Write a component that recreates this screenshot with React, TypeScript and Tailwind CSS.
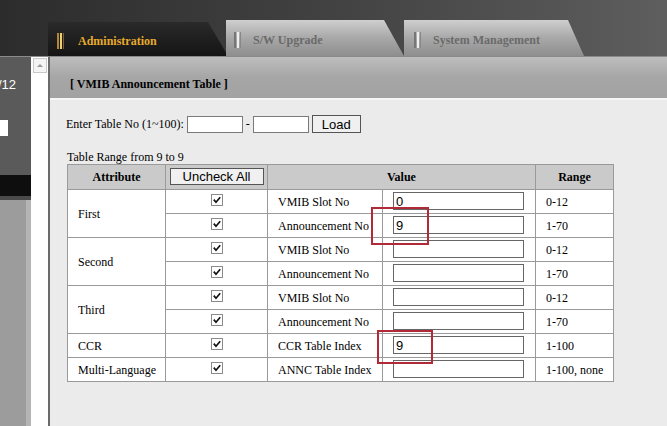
import React from 'react';

const serif = { fontFamily: '"Liberation Serif", "Times New Roman", serif' };
const sans = { fontFamily: '"Liberation Sans", Arial, sans-serif' };

const Check = () => (
    <svg width="12" height="12" viewBox="0 0 12 12" className="inline-block">
        <rect x="0.5" y="0.5" width="11" height="11" fill="#fff" stroke="#8a8a8a" />
        <path d="M2.8 5.6 L5 8.2 L9.2 3.2" fill="none" stroke="#111" strokeWidth="1.7" />
    </svg>
);

const Grip = ({ gold }: { gold?: boolean }) => (
    <div className="flex gap-[1px] h-[16px] mr-[10px]">
        <div className={`w-[2px] h-full ${gold ? 'bg-[#b08a30]' : 'bg-[#777]'}`} />
        <div className={`w-[2px] h-full ${gold ? 'bg-[#f0d070]' : 'bg-[#eee]'}`} />
        <div className={`w-[1px] h-full ${gold ? 'bg-[#806020]' : 'bg-[#888]'}`} />
    </div>
);

const rows = [
    { attr: 'First', span: 2, label: 'VMIB Slot No', value: '0', range: '0-12' },
    { attr: '', span: 0, label: 'Announcement No', value: '9', range: '1-70' },
    { attr: 'Second', span: 2, label: 'VMIB Slot No', value: '', range: '0-12' },
    { attr: '', span: 0, label: 'Announcement No', value: '', range: '1-70' },
    { attr: 'Third', span: 2, label: 'VMIB Slot No', value: '', range: '0-12' },
    { attr: '', span: 0, label: 'Announcement No', value: '', range: '1-70' },
    { attr: 'CCR', span: 1, label: 'CCR Table Index', value: '9', range: '1-100' },
    { attr: 'Multi-Language', span: 1, label: 'ANNC Table Index', value: '', range: '1-100, none' },
];

const App = () => {
    return (
        <div className="relative w-[667px] h-[426px] overflow-hidden flex flex-col bg-[#ebebeb]" style={serif}>
            {/* top bar with tabs */}
            <div className="h-[57px] shrink-0 flex items-end pl-[48px] bg-gradient-to-r from-[#2c2c2c] via-[#424242] to-[#5e5e5e] border-b border-[#8a8a8a]">
                <div className="w-[180px] h-[34px] flex items-center pl-[9px] pt-[3px] bg-gradient-to-b from-[#2a2a2a] to-[#151515] [clip-path:polygon(0_0,calc(100%-20px)_0,100%_100%,0_100%)]">
                    <Grip gold />
                    <span className="text-[12px] font-bold text-[#e6aa2c] pl-[4px]">Administration</span>
                </div>
                <div className="w-[178px] h-[36px] -ml-[2px] flex items-center pl-[8px] pt-[3px] bg-gradient-to-b from-[#cfcfcf] via-[#a8a8a8] to-[#8e8e8e] [clip-path:polygon(0_0,calc(100%-20px)_0,100%_100%,0_100%)]">
                    <Grip />
                    <span className="text-[12px] font-bold text-[#6a6a6a] pl-[2px]">S/W Upgrade</span>
                </div>
                <div className="w-[180px] h-[36px] flex items-center pl-[10px] pt-[3px] bg-gradient-to-b from-[#cfcfcf] via-[#a8a8a8] to-[#8e8e8e] [clip-path:polygon(0_0,calc(100%-16px)_0,100%_100%,0_100%)]">
                    <Grip />
                    <span className="text-[12px] font-bold text-[#6a6a6a] pl-[2px]">System Management</span>
                </div>
            </div>

            <div className="flex flex-1">
                {/* left sidebar */}
                <div className="w-[31px] flex flex-col">
                    <div className="h-[118px] bg-[#5a5a5a] flex flex-col">
                        <div className="h-[55px] flex items-center justify-end pr-[15px] text-[13px] text-white" style={sans}>
                            <span className="-ml-[10px]">/12</span>
                        </div>
                        <div className="h-[8px]" />
                        <div className="w-[8px] h-[16px] bg-white" />
                        <div className="flex-1" />
                    </div>
                    <div className="h-[21px] bg-[#0e0e0e]" />
                    <div className="h-[4px] bg-[#4a4a4a]" />
                    <div className="flex-1 flex">
                        <div className="w-[26px] bg-[#9c9c9c]" />
                        <div className="flex-1 bg-[#b4b4b4]" />
                    </div>
                </div>
                {/* scroll column */}
                <div className="w-[17px] bg-white flex flex-col items-center pt-[1px]">
                    <div className="w-[14px] h-[15px] border border-[#c8c8c8] bg-[#f4f4f4] flex items-center justify-center">
                        <div className="w-0 h-0 border-l-[3px] border-r-[3px] border-b-[3px] border-l-transparent border-r-transparent border-b-[#999]" />
                    </div>
                </div>
                <div className="w-[2px] bg-[#6a6a6a]" />

                {/* main */}
                <div className="flex-1 flex flex-col">
                    <div className="h-[43px] flex items-center pl-[20px] pt-[12px] bg-gradient-to-b from-[#bdbdbd] via-[#a6a6a6] to-[#a2a2a2] border-b-2 border-[#f6f6f6]">
                        <span className="text-[12px] font-bold text-black">[ VMIB Announcement Table ]</span>
                    </div>
                    <div className="flex-1 pl-[16px] pt-[15px] text-[12px] text-black">
                        <div className="flex items-center h-[18px]">
                            <span className="mr-[3px]">Enter Table No (1~100):</span>
                            <input className="w-[56px] h-[17px] border border-[#7a7a7a] bg-white outline-none" />
                            <span className="mx-[3px]">-</span>
                            <input className="w-[56px] h-[17px] border border-[#7a7a7a] bg-white outline-none" />
                            <button className="ml-[3px] w-[49px] h-[18px] border border-[#555] bg-[#f0f0f0] text-[13px] leading-none" style={sans}>
                                Load
                            </button>
                        </div>
                        <div className="mt-[18px] h-[13px] leading-[13px] pl-[1px]">Table Range from 9 to 9</div>
                        <table className="ml-[1px] border-collapse bg-white text-[12px]">
                            <thead>
                                <tr className="h-[25px] bg-[#cacaca]">
                                    <th className="w-[98px] border border-[#9a9a9a] font-bold p-0">Attribute</th>
                                    <th className="w-[102px] border border-[#9a9a9a] p-0">
                                        <button className="w-[94px] h-[17px] border border-[#555] bg-[#f0f0f0] text-[13px] font-normal leading-none" style={sans}>
                                            Uncheck All
                                        </button>
                                    </th>
                                    <th colSpan={2} className="border border-[#9a9a9a] font-bold p-0">Value</th>
                                    <th className="w-[78px] border border-[#9a9a9a] font-bold p-0">Range</th>
                                </tr>
                            </thead>
                            <tbody>
                                {rows.map((r, i) => (
                                    <tr key={i} className="h-[24px]">
                                        {r.span > 0 && (
                                            <td rowSpan={r.span} className="border border-[#9a9a9a] pl-[10px] pr-0 py-0">
                                                {r.attr}
                                            </td>
                                        )}
                                        <td className="border border-[#9a9a9a] text-center p-0">
                                            <div className="flex justify-center pb-[3px]">
                                                <Check />
                                            </div>
                                        </td>
                                        <td className="w-[115px] border border-[#9a9a9a] pl-[10px] p-0 whitespace-nowrap">{r.label}</td>
                                        <td className="w-[153px] border border-[#9a9a9a] pl-[10px] p-0">
                                            <input
                                                readOnly
                                                value={r.value}
                                                className="w-[131px] h-[18px] border border-[#666] bg-white px-[2px] text-[13px] outline-none"
                                                style={sans}
                                            />
                                        </td>
                                        <td className="border border-[#9a9a9a] pl-[10px] p-0 whitespace-nowrap">{r.range}</td>
                                    </tr>
                                ))}
                            </tbody>
                        </table>
                    </div>
                </div>
            </div>

            {/* red annotation boxes */}
            <div className="absolute left-[371px] top-[207px] w-[58px] h-[38px] border-2 border-[#b02a38]" />
            <div className="absolute left-[377px] top-[330px] w-[56px] h-[34px] border-2 border-[#b02a38]" />
        </div>
    );
};

export default App;
